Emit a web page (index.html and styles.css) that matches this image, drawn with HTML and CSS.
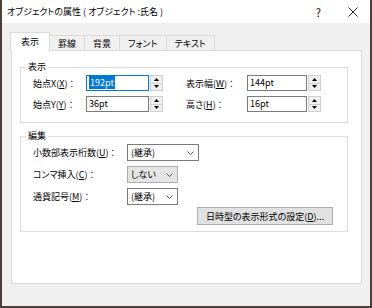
FILE: index.html
```html
<!DOCTYPE html>
<html>
<head>
    <title>オブジェクトの属性</title>
    <link rel="stylesheet" href="styles.css">
</head>
<body>
    <div class="window">
        <div class="titlebar">
            <span class="title">オブジェクトの属性 ( オブジェクト :氏名 )</span>
            <span class="help">?</span>
            <svg class="close" width="10" height="10" viewBox="0 0 10 10"><path d="M0.5 0.5L9.5 9.5M9.5 0.5L0.5 9.5" stroke="#222" stroke-width="1" fill="none"/></svg>
        </div>

        <div class="body">
            <div class="tabs">
                <div class="tab active">表示</div>
                <div class="tab">罫線</div>
                <div class="tab">背景</div>
                <div class="tab">フォント</div>
                <div class="tab">テキスト</div>
            </div>

            <div class="panel">
                <div class="group">
                    <div class="group-title">表示</div>
                    <div class="pos-grid">
                        <label>始点X(<u>X</u>) ：</label>
                        <div class="spin">
                            <div class="spin-input focus"><span class="sel">192pt</span></div>
                            <div class="spin-btns">
                                <span><svg width="5" height="3"><path d="M0 3h5L2.5 0z"/></svg></span>
                                <span><svg width="5" height="3"><path d="M0 0h5L2.5 3z"/></svg></span>
                            </div>
                        </div>
                        <label class="right">表示幅(<u>W</u>) ：</label>
                        <div class="spin">
                            <div class="spin-input">144pt</div>
                            <div class="spin-btns">
                                <span><svg width="5" height="3"><path d="M0 3h5L2.5 0z"/></svg></span>
                                <span><svg width="5" height="3"><path d="M0 0h5L2.5 3z"/></svg></span>
                            </div>
                        </div>

                        <label>始点Y(<u>Y</u>) ：</label>
                        <div class="spin">
                            <div class="spin-input">36pt</div>
                            <div class="spin-btns">
                                <span><svg width="5" height="3"><path d="M0 3h5L2.5 0z"/></svg></span>
                                <span><svg width="5" height="3"><path d="M0 0h5L2.5 3z"/></svg></span>
                            </div>
                        </div>
                        <label class="right">高さ(<u>H</u>) ：</label>
                        <div class="spin">
                            <div class="spin-input">16pt</div>
                            <div class="spin-btns">
                                <span><svg width="5" height="3"><path d="M0 3h5L2.5 0z"/></svg></span>
                                <span><svg width="5" height="3"><path d="M0 0h5L2.5 3z"/></svg></span>
                            </div>
                        </div>
                    </div>
                </div>

                <div class="group edit">
                    <div class="group-title">編集</div>
                    <div class="edit-grid">
                        <label>小数部表示桁数(<u>U</u>) ：</label>
                        <div class="combo wide">(継承)<svg class="chev" width="7" height="4"><polyline points="0.5,0.5 3.5,3.5 6.5,0.5" fill="none" stroke="#555"/></svg></div>

                        <label>コンマ挿入(<u>C</u>) ：</label>
                        <div class="combo gray">しない<svg class="chev" width="7" height="4"><polyline points="0.5,0.5 3.5,3.5 6.5,0.5" fill="none" stroke="#555"/></svg></div>

                        <label>通貨記号(<u>M</u>) ：</label>
                        <div class="combo">(継承)<svg class="chev" width="7" height="4"><polyline points="0.5,0.5 3.5,3.5 6.5,0.5" fill="none" stroke="#555"/></svg></div>
                    </div>
                    <button class="btn">日時型の表示形式の設定(<u>D</u>)...</button>
                </div>
            </div>
        </div>
    </div>
</body>
</html>
```

FILE: styles.css
```css
body { margin: 0; font-family: "Noto Sans CJK JP", sans-serif; font-size: 9px; font-feature-settings: "palt"; color: #000; }
.window { width: 368px; height: 306px; border: 2px solid #4a3f3c; border-top: none; background: #f0f0f0; }
.titlebar { height: 23px; background: #fff; display: flex; align-items: center; padding-left: 5px; }
.title { flex: 1; font-size: 9px; }
.help { font-size: 11px; margin-right: 27px; }
.close { margin-right: 12px; }
.body { padding: 9px 8px 0 9px; }
.tabs { display: flex; align-items: flex-end; height: 18px; }
.tab { height: 15px; line-height: 15px; padding: 0 8px; border: 1px solid #d9d9d9; border-bottom: none; margin-left: -1px; background: #f0f0f0; box-sizing: border-box; }
.tab.active { height: 19px; line-height: 17px; padding: 0 10px; margin-left: -1px; margin-bottom: -1px; background: #fff; position: relative; z-index: 1; }
.panel { height: 234px; box-sizing: border-box; border: 1px solid #d9d9d9; background: #fff; padding: 16px 0 0 8px; }
.group { position: relative; width: 328px; box-sizing: border-box; border: 1px solid #dcdcdc; padding: 7px 0 10px 12px; }
.group-title { position: absolute; top: -8px; left: 5px; background: #fff; padding: 0 2px; line-height: 14px; }
.edit { margin-top: 13px; padding-bottom: 6px; }
.pos-grid { display: grid; grid-template-columns: 53px 77px 84px 74px; grid-auto-rows: 16px; row-gap: 5px; align-items: center; }
.pos-grid label { white-space: nowrap; }
.pos-grid .right { padding-left: 23px; }
.spin { display: flex; height: 16px; }
.spin-input { flex: 1; box-sizing: border-box; border: 1px solid #7a7a7a; padding-left: 2px; line-height: 14px; }
.spin-input.focus { border-color: #0078d7; }
.sel { background: #0078d7; color: #fff; padding: 0 1px; }
.spin-btns { width: 13px; display: flex; flex-direction: column; margin-left: 1px; }
.spin-btns span { flex: 1; display: flex; align-items: center; justify-content: center; border: 1px solid #cfcfcf; background: #f0f0f0; }
.spin-btns span + span { border-top: none; }
.edit-grid { display: grid; grid-template-columns: 94px auto; grid-auto-rows: 17px; row-gap: 5px; align-items: center; justify-items: start; }
.edit-grid label { white-space: nowrap; }
.combo { width: 51px; height: 17px; box-sizing: border-box; border: 1px solid #7a7a7a; background: #fff; display: flex; align-items: center; padding: 0 4px 0 3px; }
.combo.wide { width: 72px; }
.combo.gray { background: #e5e5e5; border-color: #adadad; }
.chev { margin-left: auto; }
.btn { display: block; margin: 2px 0 0 164px; width: 136px; height: 18px; border: 1px solid #adadad; background: #e1e1e1; font-family: inherit; font-size: 9px; font-feature-settings: "palt"; padding: 0; }
```
